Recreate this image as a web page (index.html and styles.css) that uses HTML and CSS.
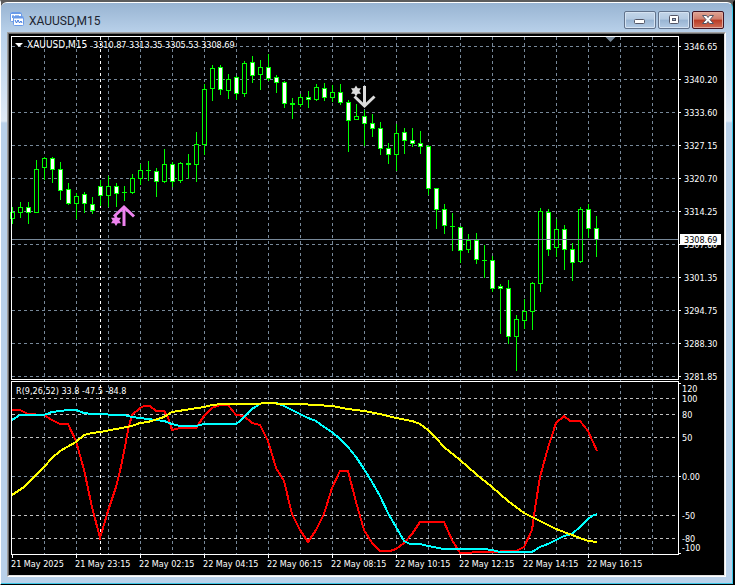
FILE: index.html
```html
<!DOCTYPE html>
<html lang="en">
<head>
<meta charset="utf-8">
<title>XAUUSD,M15</title>
<link rel="stylesheet" href="styles.css">
</head>
<body>
<main class="window">
  <div class="frame">
    <header class="titlebar">
      <svg class="app-icon" viewBox="0 0 14 14" aria-hidden="true">
        <rect x="0.5" y="0.5" width="11" height="9" rx="1" fill="#fff" stroke="#6a9be8"/>
        <path d="M1 1.5h10" stroke="#6a9be8"/>
        <path d="M2 5h2M3 3v3M5 4h2M8 3v2" stroke="#3b78e0" fill="none"/>
        <rect x="3.5" y="4.500" width="10" height="9" rx="1" fill="#fff" stroke="#6a9be8"/>
        <path d="M4 5.500h9" stroke="#6a9be8" stroke-width="2"/>
        <path d="M5 8l1.500 3 1.500-3 1.500 3 1.500-2 1 2" stroke="#3b78e0" fill="none"/>
      </svg>
      <h1 class="title">XAUUSD,M15</h1>
      <div class="controls">
        <button class="control" type="button" aria-label="Minimize">
          <svg viewBox="0 0 30 16"><rect x="9.500" y="7.500" width="10" height="4" rx="1" fill="#fff" stroke="#535666"/></svg>
        </button>
        <button class="control" type="button" aria-label="Restore">
          <svg viewBox="0 0 30 16"><rect x="10.500" y="3.500" width="9" height="8" rx="1" fill="#fff" stroke="#535666"/><rect x="13.500" y="6.500" width="3" height="2" fill="#9db8d6" stroke="#535666"/></svg>
        </button>
        <button class="control close" type="button" aria-label="Close">
          <svg viewBox="0 0 30 16"><path d="M9.500 3.500h4l1.500 2 1.500-2h4l-3.500 4.200 3.500 3.800h-4l-1.500-2-1.500 2h-4l3.500-3.800z" fill="#fff" stroke="#535666"/></svg>
        </button>
      </div>
    </header>
    <section class="client">
      <svg id="chart" class="chart" viewBox="9 34 715 541" role="img" aria-label="XAUUSD M15 candlestick chart with R(9,26,52) indicator"></svg>
    </section>
  </div>
</main>
<script src="chart.js"></script>
</body>
</html>
```
FILE: styles.css
```css
* { box-sizing: border-box; }

body {
  margin: 0;
  padding-right: 1px;
  background: #fff;
}

.window {
  border: solid #000;
  border-width: 2px 2px 1px 1px;
  border-top-color: #5c5c5c;
  border-left-color: #fff;
  background: #5c5c5c;
}

.frame {
  padding: 0 6px 6px;
  border: solid #3cc8e8;
  border-width: 1px 1px 1px 0;
  border-top-color: #fff;
  border-radius: 6px 6px 0 0;
  background: linear-gradient(#98b4d2 0, #b9d1ea 30px, #dfeaf6 118px, #b9d1ea 120px);
}

.titlebar {
  display: flex;
  align-items: center;
  height: 29px;
  padding: 0 2px 0 3px;
}

.app-icon {
  width: 14px;
  height: 14px;
  margin: 3px 5px 0 0;
}

.title {
  flex: 1;
  margin: 6px 0 0;
  font: 400 12px/18px Roboto, "Noto Sans", sans-serif;
  color: #1c2430;
}

.controls {
  display: flex;
  gap: 2px;
  margin-top: 4px;
}

.control {
  width: 32px;
  height: 18px;
  padding: 0;
  border: 1px solid #62738c;
  border-radius: 2px;
  background: linear-gradient(#c3d5e8 0, #b4cae2 45%, #98b4d2 50%, #b3cbe5 100%);
  box-shadow: inset 0 0 0 1px #d5e3f2;
}

.control svg {
  display: block;
  width: 30px;
  height: 16px;
}

.close {
  border-color: #431422;
  background: linear-gradient(#dfa494 0, #cf7d6b 45%, #b83a24 50%, #cf6e58 100%);
  box-shadow: inset 0 0 0 1px #e0a89c;
}

.client {
  border: solid;
  border-width: 1px;
  border-color: #a0a0a0 #fff #fff #a0a0a0;
  background: #000;
}

.chart {
  display: block;
  width: 100%;
  height: auto;
  border: solid;
  border-width: 1px;
  border-color: #696969 #e3e3e3 #e3e3e3 #696969;
  background: #000;
  font-family: "DejaVu Sans Condensed", "Noto Sans", sans-serif;
  font-size: 9px;
}

.chart text { fill: #fff; }
.chart .symbol { font-size: 10px; }
.crisp { shape-rendering: crispEdges; fill: none; stroke-width: 1; }
.grid { stroke: #778899; stroke-dasharray: 3 3; }
.level { stroke: #c0c0c0; stroke-dasharray: 3 3; }
.day { stroke: #fff; stroke-dasharray: 3 3; }
.price { stroke: #778899; }
.border { stroke: #fff; }
.candle { stroke: #0f0; }
.up { fill: #000; }
.down { fill: #fff; }
.series { shape-rendering: crispEdges; fill: none; stroke-width: 2; }
.slow { stroke: #ff0; }
.medium { stroke: #0ff; }
.fast { stroke: #f00; }
.marker { fill: #778899; }
.toggle, .tag { fill: #fff; }
.chart .tag-text { fill: #000; }
.buy { fill: #ee82ee; stroke: #ee82ee; }
.sell { fill: #dcdcdc; stroke: #dcdcdc; }
.arrow { fill: none; stroke-width: 3; }
.star { stroke: none; }
```
FILE: chart.js
```js
const svg = document.getElementById("chart");

function add(name, cls, attrs, text) {
  const el = document.createElementNS("http://www.w3.org/2000/svg", name);
  if (cls) el.setAttribute("class", cls);
  for (const key in attrs) el.setAttribute(key, attrs[key]);
  if (text) el.textContent = text;
  svg.appendChild(el);
}
const path = (cls, d) => add("path", cls, { d });
const label = (x, y, text, cls) => add("text", cls, { x, y }, text);

// Grid
const prices = ["3346.65", "3340.20", "3333.60", "3327.15", "3320.70", "3314.25",
  "3307.80", "3301.35", "3294.75", "3288.30", "3281.85"];
for (let x = 44; x < 678; x += 32) path("crisp grid", `M${x + 0.5} 37V554`);
prices.forEach((p, i) => path("crisp grid", `M12 ${46.5 + i * 33}H678`));
path("crisp grid", "M12 476.5H678");
for (const y of [398, 414, 437, 515, 538]) path("crisp level", `M12 ${y + 0.5}H678`);
path("crisp day", "M100.5 37V554");

// Candles: high, body top, body bottom, low, falling
const candles = [
  [207,212,218,223,0],[202,207,212,217,0],[202,207,212,223,1],[160,169,212,212,0],
  [157,158,167,179,0],[157,158,169,182,1],[162,169,190,199,1],[183,189,203,204,1],
  [193,196,203,218,0],[192,194,203,212,1],[197,204,210,213,1],[180,186,195,205,1],
  [176,186,195,206,0],[183,186,193,206,1],[186,192,192,200,0],[174,178,192,193,0],
  [164,170,178,184,0],[161,170,170,180,0],[168,171,181,196,1],[149,164,181,182,0],
  [162,164,181,186,1],[162,163,180,182,0],[154,163,164,178,0],[132,144,164,181,0],
  [84,89,144,154,0],[65,68,88,100,0],[65,67,89,94,1],[74,79,90,98,0],
  [76,77,93,99,1],[61,63,93,96,0],[56,62,75,82,1],[60,67,74,89,0],
  [54,67,78,80,1],[75,77,82,92,1],[81,82,103,107,1],[98,103,104,118,0],
  [94,97,104,106,0],[91,97,99,107,1],[84,87,99,100,0],[83,88,97,100,1],
  [85,92,97,101,0],[84,92,102,104,1],[100,102,120,151,1],[104,116,119,119,0],
  [110,116,123,145,1],[114,123,128,136,1],[122,128,148,154,1],[143,148,154,163,1],
  [124,133,154,170,0],[128,132,140,153,1],[128,140,143,146,1],[131,143,146,153,1],
  [145,146,188,194,1],[188,188,209,228,1],[204,209,225,233,1],[213,226,226,250,0],
  [226,227,250,262,1],[234,240,249,252,0],[233,240,259,263,1],[245,260,260,277,0],
  [256,260,288,291,1],[284,286,288,333,1],[280,288,336,343,1],[315,319,336,370,0],
  [299,311,320,328,0],[282,283,311,329,0],[208,211,283,291,0],[209,212,249,255,1],
  [219,229,247,256,0],[225,229,249,269,1],[243,249,262,280,1],[207,209,261,262,0],
  [204,209,228,237,1],[216,228,239,256,1]
];
candles.forEach(([high, top, bottom, low, falling], i) => {
  const x = 12.5 + i * 8;
  path("crisp candle", `M${x} ${high}V${low + 1}`);
  if (top === bottom) path("crisp candle", `M${x - 2.5} ${top + 0.5}h5`);
  else add("rect", "crisp candle " + (falling ? "down" : "up"),
    { x: x - 2, y: top + 0.5, width: 4, height: bottom - top });
});
path("crisp price", "M12 239.5H678");

// Oscillator
const line = (cls, pts) => add("polyline", "series " + cls, { points: pts });
line("fast", "12,410 20,410 28,414 44,415 52,420 60,424 68,424 76,441 84,470 92,507 100,538 108,511 116,487 120,471 124,452 128,430 132,415 140,408 144,406 150,406 156,411 164,411 168,417 172,430 180,428 196,428 204,416 212,408 220,405 228,405 236,415 244,416 252,423 260,425 268,441 276,468 284,481 292,514 300,530 308,542 316,530 324,514 332,488 340,471 348,471 356,502 364,530 372,543 380,551 390,551 396,549 404,543 412,534 420,522 444,522 452,540 460,553 484,552 516,551 524,547 532,530 536,502 540,477 548,448 556,423 564,416 570,421 580,421 588,431 597,451");
line("medium", "12,420 20,415 44,415 52,412 60,411 68,410 76,410 84,413 92,414 124,415 132,417 148,419 156,420 164,421 172,424 180,426 196,426 204,424 236,424 240,421 252,409 260,404 262,403 276,403 284,406 292,410 300,414 308,418 316,421 324,427 332,432 340,439 348,447 356,457 364,469 372,482 380,496 388,513 396,527 404,541 410,544 420,544 428,546 444,549 484,549 492,550 500,552 532,552 540,547 548,544 556,540 564,536 572,534 580,527 588,519 592,516 597,514");
line("slow", "12,495 24,487 44,467 52,458 60,451 76,442 84,435 92,433 100,432 116,429 132,426 140,423 148,422 164,417 172,412 204,407 212,405 222,404 260,404 262,403 276,403 277,404 300,404 316,405 332,406 348,409 364,411 380,414 396,418 412,421 420,424 428,430 436,438 444,447 460,460 476,474 492,487 508,501 516,507 524,513 532,517 548,525 556,529 572,535 588,541 597,542");

// Panel borders and axis ticks
path("crisp border", "M11.5 36V380M11 36.5H678.5V379.5H11M11.5 381V555M11 381.5H678.5V554.5H11");
for (const y of [...prices.map((p, i) => 46 + i * 33), 383, 476, 553]) {
  path("crisp border", `M679 ${y + 0.5}h2`);
}
const times = ["21 May 2025", "21 May 23:15", "22 May 02:15", "22 May 04:15", "22 May 06:15",
  "22 May 08:15", "22 May 10:15", "22 May 12:15", "22 May 14:15", "22 May 16:15"];
times.forEach((t, i) => {
  path("crisp border", `M${12.5 + i * 64} 555v3`);
  label(11 + i * 64, 567, t);
});

// Price axis
prices.forEach((p, i) => label(684, 50 + i * 33, p));
add("rect", "tag", { x: 680, y: 234, width: 41, height: 11 });
label(684, 243, "3308.69", "tag-text");
[["120", 392], ["100", 402], ["80", 418], ["50", 441], ["0.00", 480], ["-50", 519],
  ["-80", 542], ["-100", 551]].forEach(([t, y]) => label(682, y, t));

// Headings
path("toggle", "M15 43h8l-4 4z");
label(27, 48, "XAUUSD,M15", "symbol");
label(93, 48, "3310.87 3313.35 3305.53 3308.69");
label(16, 394, "R(9,26,52) 33.8 -47.5 -84.8");
path("marker", "M605.500 37h10l-5 5z");

// Signals
const star = (x, y) => `M${x} ${y - 5.5}l1.700 2.800h3.300l-1.700 2.700 1.700 2.700h-3.300l-1.700 2.800-1.700-2.800h-3.300l1.700-2.700-1.700-2.700h3.300z`;
path("buy arrow", "M124 226V207M114 216.500L124 207L134 216.500");
path("buy star", star(116, 220.5));
path("sell arrow", "M364.500 86V106M354.500 96.500L364.500 106L374.500 96.500");
path("sell star", star(356, 91));
```
